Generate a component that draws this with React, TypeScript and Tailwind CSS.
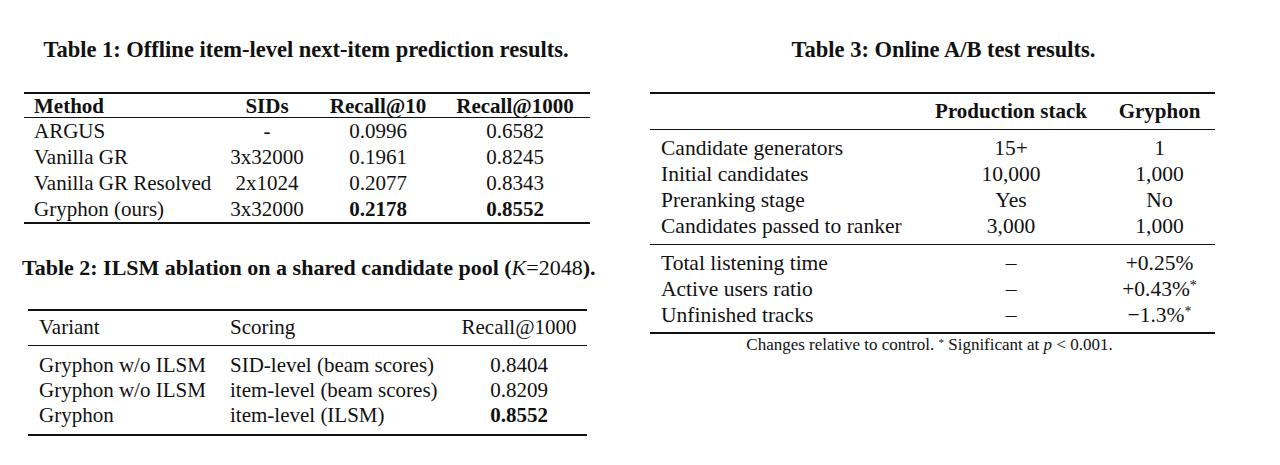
import React from 'react';

const t1Rows = [
  { method: 'ARGUS', sids: '-', r10: '0.0996', r1000: '0.6582', best: false },
  { method: 'Vanilla GR', sids: '3x32000', r10: '0.1961', r1000: '0.8245', best: false },
  { method: 'Vanilla GR Resolved', sids: '2x1024', r10: '0.2077', r1000: '0.8343', best: false },
  { method: 'Gryphon (ours)', sids: '3x32000', r10: '0.2178', r1000: '0.8552', best: true },
];

const t2Rows = [
  { variant: 'Gryphon w/o ILSM', scoring: 'SID-level (beam scores)', recall: '0.8404', best: false },
  { variant: 'Gryphon w/o ILSM', scoring: 'item-level (beam scores)', recall: '0.8209', best: false },
  { variant: 'Gryphon', scoring: 'item-level (ILSM)', recall: '0.8552', best: true },
];

const t3Pipeline = [
  ['Candidate generators', '15+', '1'],
  ['Initial candidates', '10,000', '1,000'],
  ['Preranking stage', 'Yes', 'No'],
  ['Candidates passed to ranker', '3,000', '1,000'],
];

const t3Metrics = [
  { name: 'Total listening time', value: '+0.25%', sig: false },
  { name: 'Active users ratio', value: '+0.43%', sig: true },
  { name: 'Unfinished tracks', value: '\u22121.3%', sig: true },
];

const Title = ({ children, className = '' }: { children: React.ReactNode; className?: string }) => (
  <h2 className={`text-center whitespace-nowrap font-bold text-[22.5px] leading-[28px] ${className}`}>{children}</h2>
);

export default function App() {
  return (
    <div className="w-[1280px] h-[465px] bg-white text-[#111] font-['Liberation_Serif',serif] flex pt-[36px] pl-[22px]">
      {/* Left column */}
      <div className="w-[568px] flex flex-col">
        <Title>Table 1: Offline item-level next-item prediction results.</Title>

        {/* Table 1 */}
        <div className="mt-[28px] ml-[2px] w-[566px] border-y-2 border-[#111] text-[21px]">
          <div className="grid grid-cols-[201px_84px_138px_143px] h-[24px] leading-[24px] font-bold border-b border-[#111]">
            <div className="pl-[10px]">Method</div>
            <div className="text-center">SIDs</div>
            <div className="text-center">Recall@10</div>
            <div className="text-center pr-[7px]">Recall@1000</div>
          </div>
          {t1Rows.map((r) => (
            <div key={r.method} className="grid grid-cols-[201px_84px_138px_143px] h-[26px] leading-[26px]">
              <div className="pl-[10px] whitespace-nowrap">{r.method}</div>
              <div className="text-center">{r.sids}</div>
              <div className={`text-center ${r.best ? 'font-bold' : ''}`}>{r.r10}</div>
              <div className={`text-center pr-[7px] ${r.best ? 'font-bold' : ''}`}>{r.r1000}</div>
            </div>
          ))}
        </div>

        <Title className="mt-[30px] text-[22px]">
          Table 2: ILSM ablation on a shared candidate pool (<span className="font-normal"><i>K</i>=2048</span>).
        </Title>

        {/* Table 2 */}
        <div className="mt-[27px] ml-[6px] w-[559px] border-y-2 border-[#111] text-[21px]">
          <div className="grid grid-cols-[192px_240px_127px] h-[35px] items-center border-b border-[#111]">
            <div className="pl-[11px]">Variant</div>
            <div className="pl-[10px]">Scoring</div>
            <div className="text-center pr-[9px]">Recall@1000</div>
          </div>
          <div className="pt-[7px] pb-[6px]">
            {t2Rows.map((r) => (
              <div key={r.scoring} className="grid grid-cols-[192px_240px_127px] h-[25px] leading-[25px]">
                <div className="pl-[11px] whitespace-nowrap">{r.variant}</div>
                <div className="pl-[10px] whitespace-nowrap">{r.scoring}</div>
                <div className={`text-center pr-[9px] ${r.best ? 'font-bold' : ''}`}>{r.recall}</div>
              </div>
            ))}
          </div>
        </div>
      </div>

      {/* Right column */}
      <div className="ml-[60px] w-[565px] flex flex-col">
        <Title className="pl-[22px]">Table 3: Online A/B test results.</Title>

        <div className="mt-[28px] border-y-2 border-[#111] text-[21.5px]">
          <div className="grid grid-cols-[280px_162px_123px] h-[36px] items-center font-bold text-[21px] border-b border-[#111]">
            <div />
            <div className="text-center whitespace-nowrap">Production stack</div>
            <div className="text-center pl-[12px]">Gryphon</div>
          </div>
          <div className="pt-[5px] pb-[5px] border-b border-[#111]">
            {t3Pipeline.map(([name, prod, gry]) => (
              <div key={name} className="grid grid-cols-[280px_162px_123px] h-[26px] leading-[26px]">
                <div className="pl-[11px] whitespace-nowrap">{name}</div>
                <div className="text-center">{prod}</div>
                <div className="text-center pl-[12px]">{gry}</div>
              </div>
            ))}
          </div>
          <div className="pt-[5px] pb-[4px]">
            {t3Metrics.map((m) => (
              <div key={m.name} className="grid grid-cols-[280px_162px_123px] h-[26px] leading-[26px]">
                <div className="pl-[11px] whitespace-nowrap">{m.name}</div>
                <div className="text-center">–</div>
                <div className="text-center pl-[12px] whitespace-nowrap">
                  {m.value}
                  {m.sig ? <span className="text-[14px] align-top leading-[20px]">*</span> : null}
                </div>
              </div>
            ))}
          </div>
        </div>

        <p className="text-center whitespace-nowrap text-[17px] leading-[20px] mt-[1px] pr-[6px]">
          Changes relative to control. <span className="text-[11px] align-top leading-[14px]">*</span> Significant at <i>p</i> &lt; 0.001.
        </p>
      </div>
    </div>
  );
}
